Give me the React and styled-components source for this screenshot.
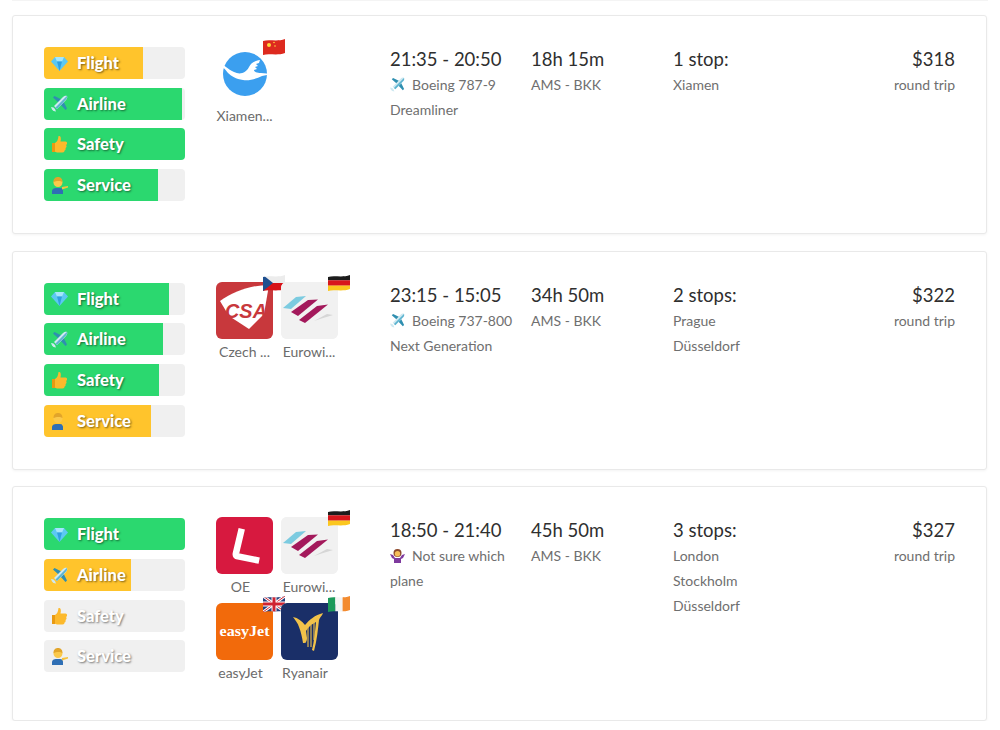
import { useId } from "react";
import styled, { createGlobalStyle } from "styled-components";

const GlobalStyle = createGlobalStyle`
    body {
        margin: 0;
        background: #fff;
        font-family: "Lato", "Noto Sans", sans-serif;
    }
`;

/*::::: EMOJI :::::*/
const Gem = () => (
    <svg width="17" height="15" viewBox="0 0 17 15">
        <path d="M4 1h9l4 4.500L8.500 15 0 5.500z" fill="#5cc8f2" />
        <path d="M4 1h9l-2 4.500H6z" fill="#a6e6fb" />
        <path d="M6 5.500h5L8.500 15z" fill="#2f9fe0" />
    </svg>
);
const PlaneIcon = ({ size = 17 }) => (
    <svg width={size} height={size} viewBox="0 0 17 17">
        <path d="M2 2.500L3.500 1l7 3.500-3 3zM9.500 9.500l3-3 3.500 7-1.500 1.500z" fill="#2f8fb0" />
        <path d="M1 14.500l-1-2.500 2.500.5 1.500 1.500 1 2.500-2.500-.5zM12 2c1.500-1.500 3.500-1.500 4-1s.5 2.500-1 4L6 14l-3-3z" fill="#cfe9f1" />
        <path d="M15.800 1c.5.800.2 2.800-.8 3.500L6 14l-1.500-1.500z" fill="#5db4d0" />
    </svg>
);
const Thumb = () => (
    <svg width="17" height="18" viewBox="0 0 17 18">
        <path d="M1 8h3v9H1z" fill="#e89a12" />
        <path d="M4 8c2-1 3-3 3.500-7 2-.5 3 1.500 2 5.500h5c2 0 2 3 .5 3.500 1 1 .5 2.500-.5 3 .5 1 0 2.300-1 2.500 0 1-.5 2-2 2H7c-1.500 0-2-.8-3-.8z" fill="#fcb92c" />
    </svg>
);
const Attendant = () => (
    <svg width="18" height="18" viewBox="0 0 18 18">
        <path d="M1 18v-3c0-2 2-3 4-3h4c2 0 3 1 3 3v3z" fill="#2f6fb5" />
        <path d="M11 11l6-1v1.500l-6 2z" fill="#f5c23c" />
        <circle cx="7" cy="6.500" r="4.500" fill="#fbc94b" />
        <path d="M2.500 6C2.500 2 5 1 7 1s4.500 1 4.500 5C10 4.500 5 4.500 2.500 6z" fill="#e2a52a" />
    </svg>
);
const Shrug = () => (
    <svg width="15" height="15" viewBox="0 0 15 15">
        <path d="M0 6l3 1 2 3h5l2-3 3-1-2 4-2 1v4H4v-4l-2-1z" fill="#7e3a9e" />
        <circle cx="7.500" cy="5" r="4" fill="#8d4a2c" />
        <circle cx="7.500" cy="5.800" r="2.700" fill="#f6bd5a" />
    </svg>
);

const ICONS = { Flight: <Gem />, Airline: <PlaneIcon />, Safety: <Thumb />, Service: <Attendant /> };

/*::::: FLAGS :::::*/
const China = () => (
    <>
        <rect width="22" height="16" fill="#dd2a1f" />
        <circle cx="6" cy="6" r="2" fill="#ffd93b" />
        <circle cx="11" cy="3.500" r=".8" fill="#ffd93b" />
        <circle cx="12" cy="7" r=".8" fill="#ffd93b" />
    </>
);
const Czech = () => (
    <>
        <rect width="22" height="8" fill="#ececec" />
        <rect y="8" width="22" height="8" fill="#d7141a" />
        <path d="M0 0l10 8-10 8z" fill="#1f4f8f" />
    </>
);
const Germany = () => (
    <>
        <rect width="22" height="5.400" fill="#1c1c1c" />
        <rect y="5.300" width="22" height="5.400" fill="#d8171c" />
        <rect y="10.600" width="22" height="5.400" fill="#fbc71f" />
    </>
);
const Britain = () => (
    <>
        <rect width="22" height="16" fill="#27407f" />
        <path d="M0 0l22 16M22 0L0 16" stroke="#fff" strokeWidth="3" />
        <path d="M0 0l22 16M22 0L0 16" stroke="#cf2331" strokeWidth="1" />
        <path d="M11 0v16M0 8h22" stroke="#fff" strokeWidth="5" />
        <path d="M11 0v16M0 8h22" stroke="#cf2331" strokeWidth="3" />
    </>
);
const Ireland = () => (
    <>
        <rect width="7.400" height="16" fill="#1d9a5b" />
        <rect x="7.300" width="7.400" height="16" fill="#f4f4f4" />
        <rect x="14.600" width="7.400" height="16" fill="#f38b30" />
    </>
);
const FLAGS = { cn: China, cz: Czech, de: Germany, gb: Britain, ie: Ireland };

function WavyFlag({ code }) {
    const clipId = useId();
    const Flag = FLAGS[code];
    return (
        <FlagBadge viewBox="0 0 22 16">
            <clipPath id={clipId}>
                <path d="M0 2C6 0 14 3 22 0v14c-8 3-16 0-22 2z" />
            </clipPath>
            <g clipPath={`url(#${clipId})`}>
                <Flag />
            </g>
        </FlagBadge>
    );
}

/*::::: LOGOS :::::*/
const Xiamen = () => (
    <svg viewBox="0 0 57 57">
        <circle cx="29" cy="28" r="22" fill="#3b9fef" />
        <path d="M2 16C8 18 11 23 18 26C24 29 30 27 33 21C35 17 38 15 44 14L43 17L40 18L42 20L39 21L41 23L38 24C38 26 41 27 45 27L56 28L46 30C40 33 33 35 27 34C20 33 15 30 12 27C9 23 5 19 2 16z" fill="#fff" />
    </svg>
);
const Csa = () => (
    <svg viewBox="0 0 57 57">
        <rect width="57" height="57" fill="#c8383c" />
        <path d="M4 19C18 9 36 3 53 3l-5 29-15 15-20-13z" fill="#fff" />
        <text x="9" y="36" fontFamily="Liberation Sans" fontStyle="italic" fontWeight="700" fontSize="21" fill="#c8383c" textLength="42" lengthAdjust="spacingAndGlyphs">CSA</text>
    </svg>
);
const Eurowings = () => (
    <svg viewBox="0 0 57 57">
        <rect width="57" height="57" fill="#f1f1f1" />
        <path d="M2 26L15 15l10-1L10 27z" fill="#7ccbe0" />
        <path d="M10 30l17-12 10-.5L17 34z" fill="#a3195b" />
        <path d="M18 38l18-14 11-1.500L24 41z" fill="#a3195b" />
        <path d="M33 39l13-7 6 1-13 4z" fill="#d6d6d6" />
    </svg>
);
const Oe = () => (
    <svg viewBox="0 0 57 57">
        <rect width="57" height="57" fill="#d7193f" />
        <path d="M25 15l-5 21c-.5 2 .5 3 2 3.400L40 43" fill="none" stroke="#fff" strokeWidth="6.500" strokeLinecap="square" strokeLinejoin="round" />
    </svg>
);
const EasyJet = () => (
    <svg viewBox="0 0 57 57">
        <rect width="57" height="57" fill="#f26a0b" />
        <text x="3.500" y="33" fontFamily="Liberation Serif" fontWeight="700" fontSize="15" fill="#fff" textLength="50" lengthAdjust="spacingAndGlyphs">easyJet</text>
    </svg>
);
const Ryanair = () => (
    <svg viewBox="0 0 57 57">
        <rect width="57" height="57" fill="#1a2f68" />
        <path d="M12 14c5 1 9 4 12 8 4-5 10-10 18-12-1 3-3 4-4 7-1 9-2 20-5 31l-2-1c2-8 3-18 4-28-4 2-8 5-10 9l1 7c0 3-1 5-4 5-1-6-2-11-4-16-1-4-4-7-6-10z" fill="#f1c24a" />
        <path d="M24 24v16M27 24v20M30 22v22M33 19v18" stroke="#f1c24a" strokeWidth="1.100" />
    </svg>
);
const LOGOS = { xiamen: Xiamen, csa: Csa, eurowings: Eurowings, oe: Oe, easyjet: EasyJet, ryanair: Ryanair };

const FLIGHTS = [
    {
        scores: [["Flight", 70, "yellow"], ["Airline", 98, "green"], ["Safety", 100, "green"], ["Service", 81, "green"]],
        airlines: [["xiamen", "Xiamen...", "cn"]],
        time: "21:35 - 20:50",
        icon: <PlaneIcon size={15} />,
        plane: "Boeing 787-9 Dreamliner",
        duration: "18h 15m",
        stops: "1 stop:",
        via: ["Xiamen"],
        price: "$318",
    },
    {
        scores: [["Flight", 89, "green"], ["Airline", 84.500, "green"], ["Safety", 81.500, "green"], ["Service", 76, "yellow"]],
        airlines: [["csa", "Czech ...", "cz"], ["eurowings", "Eurowi...", "de"]],
        time: "23:15 - 15:05",
        icon: <PlaneIcon size={15} />,
        plane: "Boeing 737-800 Next Generation",
        duration: "34h 50m",
        stops: "2 stops:",
        via: ["Prague", "Düsseldorf"],
        price: "$322",
    },
    {
        scores: [["Flight", 100, "green"], ["Airline", 62, "yellow"], ["Safety", 0, "green"], ["Service", 0, "green"]],
        airlines: [["oe", "OE"], ["eurowings", "Eurowi...", "de"], ["easyjet", "easyJet", "gb"], ["ryanair", "Ryanair", "ie"]],
        time: "18:50 - 21:40",
        icon: <Shrug />,
        plane: "Not sure which plane",
        duration: "45h 50m",
        stops: "3 stops:",
        via: ["London", "Stockholm", "Düsseldorf"],
        price: "$327",
    },
];

export default function App() {
    return (
        <Page>
            <GlobalStyle />
            <PreviousEdge />
            {FLIGHTS.map((flight) => (
                <Card key={flight.price}>
                    <Scores>
                        {flight.scores.map(([label, value, color]) => (
                            <Track key={label}>
                                <Fill $color={color} style={{ width: `${value}%` }} />
                                <ScoreIcon>{ICONS[label]}</ScoreIcon>
                                <ScoreLabel>{label}</ScoreLabel>
                            </Track>
                        ))}
                    </Scores>
                    <Logos>
                        {flight.airlines.map(([logo, name, flag]) => {
                            const Logo = LOGOS[logo];
                            return (
                                <Airline key={logo}>
                                    <Tile $plain={logo === "xiamen"}>
                                        <Logo />
                                    </Tile>
                                    {flag && <WavyFlag code={flag} />}
                                    <AirlineName $full={!name.includes("...")}>{name}</AirlineName>
                                </Airline>
                            );
                        })}
                    </Logos>
                    <div>
                        <Big>{flight.time}</Big>
                        <Small>
                            <PlaneGlyph>{flight.icon}</PlaneGlyph>
                            {flight.plane}
                        </Small>
                    </div>
                    <div>
                        <Big>{flight.duration}</Big>
                        <Small>AMS - BKK</Small>
                    </div>
                    <div>
                        <Big>{flight.stops}</Big>
                        {flight.via.map((city) => (
                            <Small key={city}>{city}</Small>
                        ))}
                    </div>
                    <Price>
                        <Big>{flight.price}</Big>
                        <Small>round trip</Small>
                    </Price>
                </Card>
            ))}
        </Page>
    );
}

/*::::: STYLES :::::*/
const Page = styled.div`
    width: 1000px;
    box-sizing: border-box;
    padding: 0 12px;
    display: flex;
    flex-direction: column;
    gap: 16.700px;
`;
const PreviousEdge = styled.div`
    height: 0;
    margin-bottom: -2.700px;
    border-bottom: 1px solid #f4f4f4;
`;
const Card = styled.div`
    width: 975px;
    min-height: 219px;
    box-sizing: border-box;
    padding: 31px;
    background: #fff;
    border: 1px solid #e9e9e9;
    border-radius: 3px;
    box-shadow: 0 1px 3px rgba(0, 0, 0, 0.05);

    display: grid;
    grid-template-columns: 172px 174px 141px 142px 1fr 100px;
    align-items: start;
`;
const Scores = styled.div`
    width: 141px;
    display: flex;
    flex-direction: column;
    gap: 8.700px;
`;
const Track = styled.div`
    position: relative;
    height: 32px;
    background: #f0f0f0;
    border-radius: 4px;
    overflow: hidden;
`;
const Fill = styled.div`
    height: 100%;
    background: ${(props) => (props.$color === "yellow" ? "#ffc42c" : "#2bd86f")};
`;
const ScoreIcon = styled.span`
    position: absolute;
    left: 7px;
    top: 0;
    height: 100%;
    display: flex;
    align-items: center;
`;
const ScoreLabel = styled.span`
    position: absolute;
    left: 33px;
    top: 0;
    line-height: 32px;
    font-size: 16.500px;
    font-weight: 900;
    color: #fff;
    text-shadow: 1px 1px 2px rgba(0, 0, 0, 0.5);
`;
const Logos = styled.div`
    display: grid;
    grid-template-columns: 57px 57px;
    column-gap: 7.500px;
    margin-top: -1px;
`;
const Airline = styled.div`
    position: relative;
    width: 57px;
    height: 86px;
`;
const Tile = styled.div`
    width: 57px;
    height: 57px;
    border-radius: 6px;
    overflow: hidden;
    background: ${(props) => (props.$plain ? "#fff" : "#f1f1f1")};

    svg {
        display: block;
        width: 57px;
        height: 57px;
    }
`;
const FlagBadge = styled.svg`
    position: absolute;
    left: 47px;
    top: -7px;
    width: 22px;
    height: 16px;
`;
const AirlineName = styled.div`
    margin-top: 4px;
    padding-right: ${(props) => (props.$full ? "8px" : "0")};
    font-size: 14px;
    line-height: 18px;
    color: #6b6b6b;
    text-align: center;
    white-space: nowrap;
`;
const Big = styled.div`
    font-size: 18.500px;
    line-height: 24px;
    color: #2f2f2f;
`;
const Small = styled.div`
    font-size: 14px;
    line-height: 25px;
    margin-top: 1px;
    color: #6f6f6f;
    & + & {
        margin-top: 0;
    }
`;
const PlaneGlyph = styled.span`
    display: inline-block;
    width: 22px;
    line-height: 0;
    vertical-align: -2px;
`;
const Price = styled.div`
    text-align: right;
`;
